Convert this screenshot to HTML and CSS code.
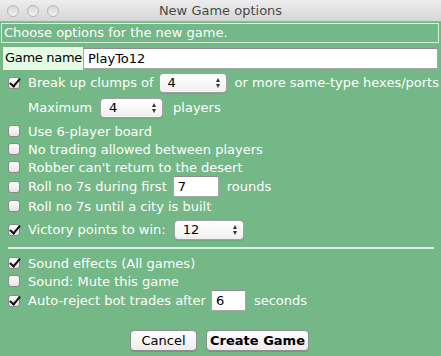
FILE: index.html
```html
<!DOCTYPE html>
<html>
<head>
<meta charset="utf-8">
<link rel="stylesheet" href="styles.css">
</head>
<body>
<div class="window">
  <div class="titlebar">
    <div class="lights"><span class="light"></span><span class="light"></span><span class="light"></span></div>
    <div class="title">New Game options</div>
  </div>
  <div class="content">
    <div class="banner">Choose options for the new game.</div>
    <div class="namerow">
      <div class="namelabel">Game name</div>
      <div class="namefield">PlayTo12</div>
    </div>

    <div class="row r21 mt2">
      <span class="cb on"></span><span class="lbl">Break up clumps of</span>
      <span class="select s-clump"><span class="val">4</span><span class="arrows"></span></span>
      <span class="lbl after">or more same-type hexes/ports</span>
    </div>
    <div class="row r21 mt4 indent">
      <span class="lbl">Maximum</span>
      <span class="select s-max"><span class="val">4</span><span class="arrows"></span></span>
      <span class="lbl after2">players</span>
    </div>
    <div class="row r18 mt4"><span class="cb"></span><span class="lbl">Use 6-player board</span></div>
    <div class="row r18"><span class="cb"></span><span class="lbl">No trading allowed between players</span></div>
    <div class="row r18"><span class="cb"></span><span class="lbl">Robber can't return to the desert</span></div>
    <div class="row r21">
      <span class="cb"></span><span class="lbl">Roll no 7s during first</span>
      <span class="field f-rounds">7</span>
      <span class="lbl after">rounds</span>
    </div>
    <div class="row r18"><span class="cb"></span><span class="lbl">Roll no 7s until a city is built</span></div>
    <div class="row r21 mt4">
      <span class="cb on"></span><span class="lbl">Victory points to win:</span>
      <span class="select s-vp"><span class="val">12</span><span class="arrows"></span></span>
    </div>
    <div class="sep"></div>
    <div class="row r18"><span class="cb on"></span><span class="lbl">Sound effects (All games)</span></div>
    <div class="row r18"><span class="cb"></span><span class="lbl">Sound: Mute this game</span></div>
    <div class="row r21">
      <span class="cb on"></span><span class="lbl">Auto-reject bot trades after</span>
      <span class="field f-secs">6</span>
      <span class="lbl after">seconds</span>
    </div>
    <div class="buttons">
      <span class="btn b-cancel">Cancel</span>
      <span class="btn b-create">Create Game</span>
    </div>
  </div>
</div>
</body>
</html>
```
FILE: styles.css
```css
html, body {
  margin: 0;
  padding: 0;
}
body {
  width: 441px;
  height: 356px;
  overflow: hidden;
  font-family: "DejaVu Sans", "Liberation Sans", sans-serif;
  font-size: 13px;
  background: #73b886;
}
.window {
  width: 441px;
  height: 356px;
  display: flex;
  flex-direction: column;
}
.titlebar {
  height: 22px;
  box-sizing: border-box;
  background: linear-gradient(#ededed, #d6d6d6);
  border-bottom: 1px solid #a9a9a9;
  display: flex;
  align-items: center;
  position: relative;
}
.lights {
  display: flex;
  gap: 8px;
  padding-left: 7px;
}
.light {
  width: 12px;
  height: 12px;
  box-sizing: border-box;
  border-radius: 50%;
  border: 1px solid #b4b4b4;
  background: linear-gradient(#d8d8d8, #f2f2f2);
}
.title {
  position: absolute;
  left: 0;
  right: 0;
  top: 3px;
  text-align: center;
  color: #4a4a4a;
  font-size: 13px;
}
.content {
  flex: 1;
  display: flex;
  flex-direction: column;
}
.banner {
  margin: 1px 2px 0 1px;
  height: 20px;
  box-sizing: border-box;
  border: 1px solid #d7eedc;
  color: #ffffff;
  padding-left: 2px;
  line-height: 18px;
  white-space: nowrap;
}
.namerow {
  display: flex;
  margin: 4px 3px 0 3px;
  height: 23px;
}
.namelabel {
  flex: none;
  background: #e5fbe3;
  color: #000;
  padding: 0 1px 0 2px;
  line-height: 21px;
  white-space: nowrap;
  letter-spacing: -0.3px;
}
.namefield {
  flex: 1;
  margin-top: 1px;
  height: 21px;
  box-sizing: border-box;
  background: #fff;
  border: 1px solid #a6a6a6;
  border-top-color: #8e8e8e;
  color: #000;
  padding-left: 4px;
  line-height: 20px;
}
.row {
  display: flex;
  align-items: center;
  padding-left: 8px;
  color: #fff;
}
.r18 { height: 18px; }
.r21 { height: 21px; }
.mt2 { margin-top: 2px; }
.mt4 { margin-top: 4px; }
.indent { padding-left: 28px; }
.cb {
  width: 12px;
  height: 12px;
  box-sizing: border-box;
  border: 1px solid #8a8a8a;
  border-radius: 3px;
  background: linear-gradient(#ffffff, #e4e4e4);
  margin-right: 8px;
  position: relative;
  flex: none;
}
.cb.on::after {
  content: "";
  position: absolute;
  left: 3px;
  top: -2px;
  width: 4px;
  height: 9px;
  border-right: 2px solid #111;
  border-bottom: 2px solid #111;
  transform: rotate(40deg);
}
.lbl {
  white-space: nowrap;
}
.after { margin-left: 8px; }
.after2 { margin-left: 10px; }
.select {
  height: 20px;
  box-sizing: border-box;
  border: 1px solid #a2a2a2;
  border-radius: 4px;
  background: linear-gradient(#ffffff, #f0f0f0);
  color: #000;
  display: flex;
  align-items: center;
  justify-content: space-between;
  padding: 0 5px 0 8px;
  box-shadow: 0 1px 0 rgba(0,0,0,0.08);
}
.s-clump { width: 68px; margin-left: 5px; }
.s-max { width: 63px; margin-left: 8px; }
.s-vp { width: 70px; margin-left: 8px; }
.arrows {
  width: 5px;
  height: 10px;
  position: relative;
}
.arrows::before, .arrows::after {
  content: "";
  position: absolute;
  left: 0;
  border-left: 2.5px solid transparent;
  border-right: 2.5px solid transparent;
}
.arrows::before {
  top: 0;
  border-bottom: 4px solid #333;
}
.arrows::after {
  bottom: 0;
  border-top: 4px solid #333;
}
.field {
  height: 21px;
  box-sizing: border-box;
  background: #fff;
  border: 1px solid #a6a6a6;
  border-top-color: #8e8e8e;
  color: #000;
  padding-left: 4px;
  line-height: 19px;
}
.f-rounds { width: 46px; margin-left: 6px; }
.f-secs { width: 35px; margin-left: 5px; }
.sep {
  height: 2px;
  background: #dbefdd;
  margin: 7px 7px 5px 8px;
}
.buttons {
  display: flex;
  justify-content: center;
  gap: 9px;
  margin-top: 19px;
  padding-right: 2px;
}
.btn {
  height: 21px;
  box-sizing: border-box;
  border: 1px solid #8f8f8f;
  border-radius: 4px;
  background: linear-gradient(#ffffff, #ececec);
  color: #000;
  display: flex;
  align-items: center;
  justify-content: center;
  box-shadow: 0 1px 0 rgba(0,0,0,0.12);
}
.b-cancel { width: 67px; }
.b-create { width: 103px; font-weight: bold; }
```
